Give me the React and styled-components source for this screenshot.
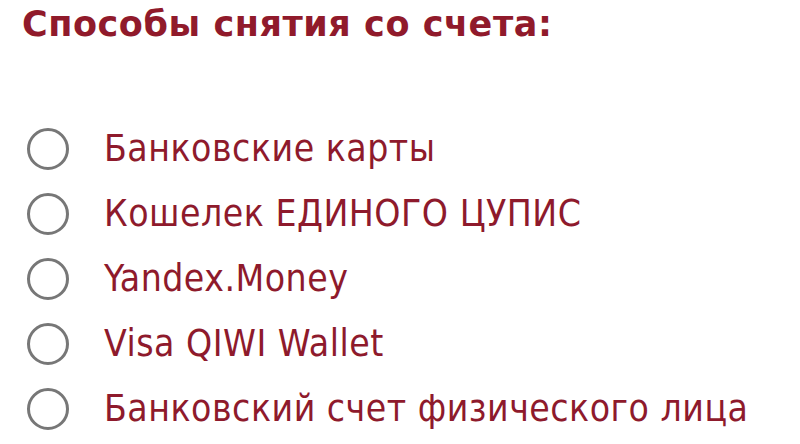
import styled, { createGlobalStyle } from "styled-components"

const GlobalStyle = createGlobalStyle`
  body {
    margin: 0;
    background: #ffffff;
    font-family: "DejaVu Sans Condensed", "DejaVu Sans", sans-serif;
  }
`

const Page = styled.div`
  padding: 0 0 0 22px;
  width: 800px;
  height: 444px;
  box-sizing: border-box;
  overflow: hidden;
`

const Title = styled.h2`
  margin: 0;
  padding-top: 4px;
  font-family: "DejaVu Sans", sans-serif;
  font-size: 35px;
  line-height: 40px;
  font-weight: bold;
  letter-spacing: 0.55px;
  color: #901a2b;
`

const List = styled.div`
  display: flex;
  flex-direction: column;
  gap: 20px;
  margin-top: 82px;
`

const Option = styled.label`
  display: flex;
  align-items: center;
  gap: 35px;
  height: 45px;
  cursor: pointer;
`

const Radio = styled.span`
  width: 36px;
  height: 36px;
  margin-left: 5px;
  border: 3px solid #777777;
  border-radius: 50%;
  flex-shrink: 0;
`

const Label = styled.span`
  font-size: 37px;
  letter-spacing: 0.5px;
  color: #8e1a2c;
  line-height: 45px;
`

const methods = [
  "Банковские карты",
  "Кошелек ЕДИНОГО ЦУПИС",
  "Yandex.Money",
  "Visa QIWI Wallet",
  "Банковский счет физического лица",
]

const App = () => {
  return (
    <>
      <GlobalStyle />
      <Page>
        <Title>Способы снятия со счета:</Title>
        <List>
          {methods.map((m) => (
            <Option key={m}>
              <Radio />
              <Label>{m}</Label>
            </Option>
          ))}
        </List>
      </Page>
    </>
  )
}

export default App
